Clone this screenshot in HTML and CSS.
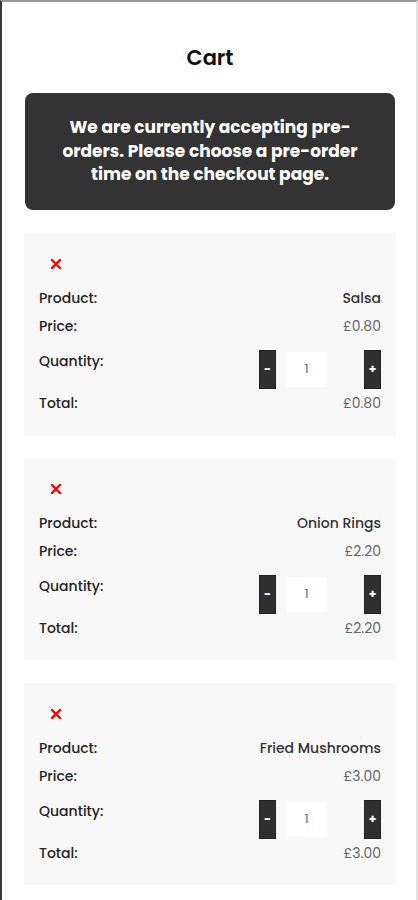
FILE: index.html
```html
<!DOCTYPE HTML>
<html lang="en-GB">
<head>
    <title>Cart</title>
    <meta charset="UTF-8">
    <meta name="viewport" content="width=device-width, initial-scale=1"/>
    <link rel="stylesheet" href="styles.css">
</head>
<body>
<div class="page">
    <h2 class="page-title">Cart</h2>

    <div class="notice">
        We are currently accepting pre-orders. Please choose a pre-order time on the checkout page.
    </div>

    <div class="cart-item">
        <div class="cart-row remove-row">
            <button class="remove-btn" aria-label="Remove">
                <svg width="10" height="10" viewBox="0 0 10 10"><path d="M1 1L9 9M9 1L1 9" stroke="#f00" stroke-width="2.4" stroke-linecap="square"/></svg>
            </button>
        </div>
        <div class="cart-row product-row">
            <span class="label">Product:</span>
            <span class="value name">Salsa</span>
        </div>
        <div class="cart-row">
            <span class="label">Price:</span>
            <span class="value">£0.80</span>
        </div>
        <div class="cart-row qty-row">
            <span class="label">Quantity:</span>
            <div class="qty">
                <button class="qty-btn">-</button>
                <input class="qty-input" type="text" value="1">
                <button class="qty-btn">+</button>
            </div>
        </div>
        <div class="cart-row">
            <span class="label">Total:</span>
            <span class="value">£0.80</span>
        </div>
    </div>

    <div class="cart-item">
        <div class="cart-row remove-row">
            <button class="remove-btn" aria-label="Remove">
                <svg width="10" height="10" viewBox="0 0 10 10"><path d="M1 1L9 9M9 1L1 9" stroke="#f00" stroke-width="2.4" stroke-linecap="square"/></svg>
            </button>
        </div>
        <div class="cart-row product-row">
            <span class="label">Product:</span>
            <span class="value name">Onion Rings</span>
        </div>
        <div class="cart-row">
            <span class="label">Price:</span>
            <span class="value">£2.20</span>
        </div>
        <div class="cart-row qty-row">
            <span class="label">Quantity:</span>
            <div class="qty">
                <button class="qty-btn">-</button>
                <input class="qty-input" type="text" value="1">
                <button class="qty-btn">+</button>
            </div>
        </div>
        <div class="cart-row">
            <span class="label">Total:</span>
            <span class="value">£2.20</span>
        </div>
    </div>

    <div class="cart-item">
        <div class="cart-row remove-row">
            <button class="remove-btn" aria-label="Remove">
                <svg width="10" height="10" viewBox="0 0 10 10"><path d="M1 1L9 9M9 1L1 9" stroke="#f00" stroke-width="2.4" stroke-linecap="square"/></svg>
            </button>
        </div>
        <div class="cart-row product-row">
            <span class="label">Product:</span>
            <span class="value name">Fried Mushrooms</span>
        </div>
        <div class="cart-row">
            <span class="label">Price:</span>
            <span class="value">£3.00</span>
        </div>
        <div class="cart-row qty-row">
            <span class="label">Quantity:</span>
            <div class="qty">
                <button class="qty-btn">-</button>
                <input class="qty-input" type="text" value="1">
                <button class="qty-btn">+</button>
            </div>
        </div>
        <div class="cart-row">
            <span class="label">Total:</span>
            <span class="value">£3.00</span>
        </div>
    </div>
</div>
</body>
</html>
```

FILE: styles.css
```css
* {
    box-sizing: border-box;
}

html, body {
    margin: 0;
    padding: 0;
    background: #fff;
}

body {
    font-family: "Poppins", "Open Sans", sans-serif;
    color: #222;
}

.page {
    width: 418px;
    height: 900px;
    overflow: hidden;
    padding: 0 20px 0 22px;
    border-top: 2px solid #9a9a9a;
    border-left: 2px solid #3a3a3a;
    border-right: 2px solid #e2e2e2;
}

.page-title {
    margin: 41px 0 20px;
    font-size: 21px;
    line-height: 30px;
    font-weight: 600;
    text-align: center;
    color: #111;
}

.notice {
    margin: 0 1px 23px 1px;
    padding: 23px 28px;
    background-color: #333;
    border-radius: 8px;
    color: #fff;
    font-size: 17px;
    font-weight: 700;
    line-height: 23.5px;
    text-align: center;
}

.cart-item {
    margin-bottom: 23px;
    padding: 20px 15px 17px;
    background-color: #f8f8f8;
    font-size: 14px;
}

.cart-row {
    display: flex;
    justify-content: space-between;
    align-items: center;
    height: 28px;
}

.remove-row {
    height: 22px;
    margin-bottom: 9px;
}

.product-row {
    height: 29px;
}

.remove-btn {
    margin: 0 0 0 12px;
    padding: 0;
    border: 0;
    background: none;
    line-height: 0;
    cursor: pointer;
}

.label {
    color: #222;
    font-weight: 500;
}

.value {
    color: #666;
}

.value.name {
    color: #333;
    font-weight: 500;
}

.qty-row {
    height: auto;
    align-items: flex-start;
    padding: 9px 0 1px;
}

.qty-row .label {
    line-height: 22px;
}

.qty {
    display: flex;
    align-items: center;
}

.qty-btn {
    width: 17px;
    height: 39px;
    padding: 0;
    border: 1px solid #222;
    background-color: #2f2f2f;
    color: #fff;
    font-family: inherit;
    font-size: 12px;
    font-weight: 700;
}

.qty-input {
    width: 41px;
    height: 35px;
    margin: 0 37px 0 10px;
    border: 0;
    background: #fff;
    color: #666;
    font-family: inherit;
    font-size: 13px;
    text-align: center;
}
```
